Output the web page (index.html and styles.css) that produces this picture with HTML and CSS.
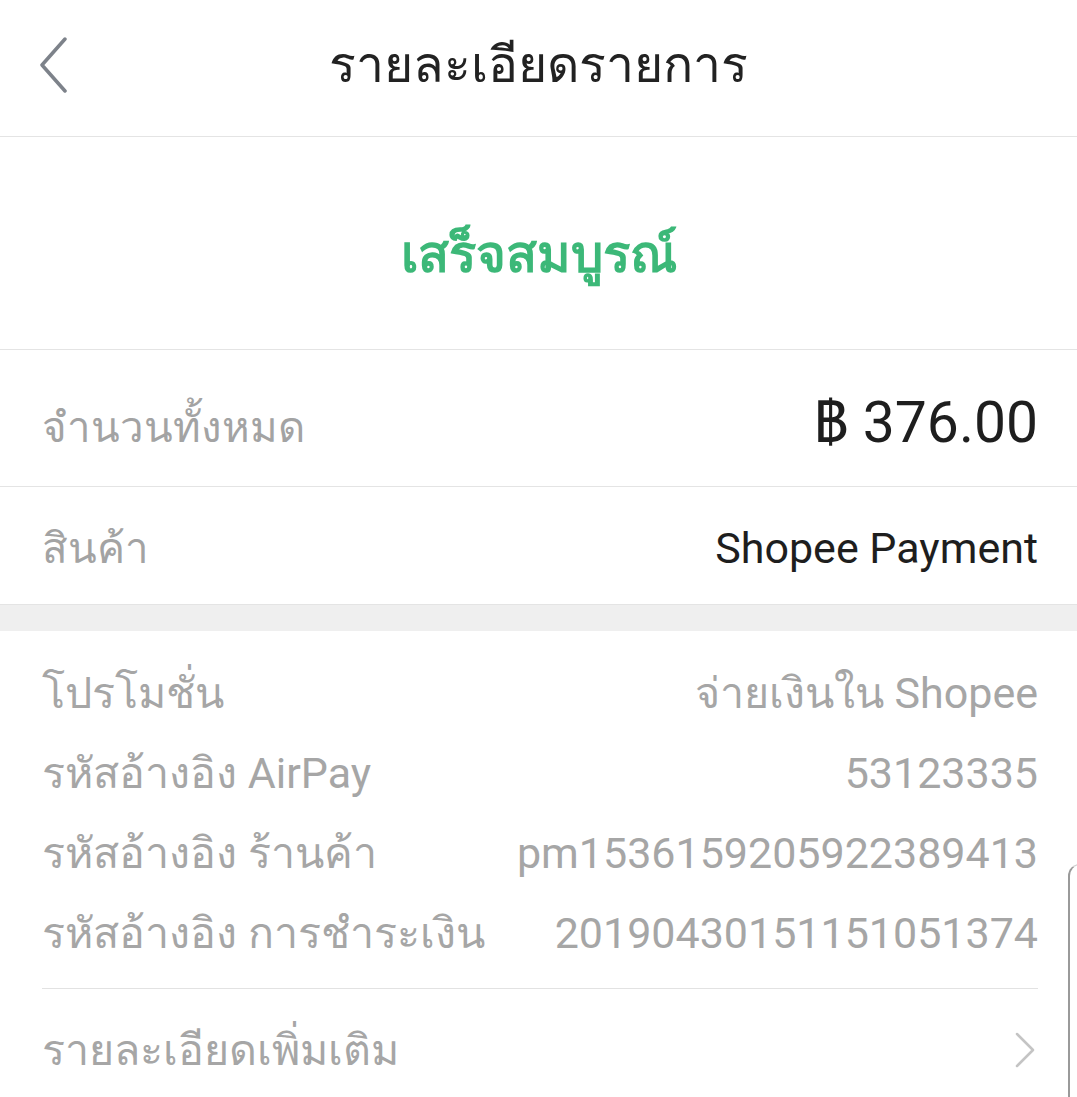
FILE: index.html
```html
<!DOCTYPE html>
<html lang="th">
<head>
<meta charset="utf-8">
<title>รายละเอียดรายการ</title>
<link rel="stylesheet" href="styles.css">
</head>
<body>
<div class="screen">
  <header class="topbar">
    <span class="back">
      <svg width="30" height="56" viewBox="0 0 30 56"><path d="M27 2 L4 28 L27 54" fill="none" stroke="#7d828a" stroke-width="3.5" stroke-linecap="round" stroke-linejoin="round"/></svg>
    </span>
    <h1 class="title">รายละเอียดรายการ</h1>
  </header>
  <section class="status">เสร็จสมบูรณ์</section>
  <div class="row row-total">
    <span class="label">จำนวนทั้งหมด</span>
    <span class="amount">฿ 376.00</span>
  </div>
  <div class="row row-product">
    <span class="label">สินค้า</span>
    <span class="value">Shopee Payment</span>
  </div>
  <div class="gap"></div>
  <section class="details">
    <div class="drow"><span>โปรโมชั่น</span><span>จ่ายเงินใน Shopee</span></div>
    <div class="drow"><span>รหัสอ้างอิง AirPay</span><span>53123335</span></div>
    <div class="drow"><span>รหัสอ้างอิง ร้านค้า</span><span>pm1536159205922389413</span></div>
    <div class="drow"><span>รหัสอ้างอิง การชำระเงิน</span><span>20190430151151051374</span></div>
    <div class="divider"></div>
    <div class="more">
      <span>รายละเอียดเพิ่มเติม</span>
      <svg width="20" height="36" viewBox="0 0 20 36"><path d="M2 2 L18 18 L2 34" fill="none" stroke="#c4c4c4" stroke-width="2.5" stroke-linecap="round" stroke-linejoin="round"/></svg>
    </div>
  </section>
  <div class="edge"></div>
</div>
</body>
</html>
```
FILE: styles.css
```css
* { box-sizing: border-box; }
html, body { margin: 0; padding: 0; background: #fff; }
body {
  font-family: Roboto, "Noto Sans", sans-serif;
  color: #222;
}
.screen {
  position: relative;
  width: 1077px;
  height: 1097px;
  overflow: hidden;
  background: #fff;
}
.topbar {
  height: 137px;
  border-bottom: 1px solid #e4e4e4;
  display: flex;
  align-items: center;
  justify-content: center;
  position: relative;
}
.back {
  position: absolute;
  left: 38px;
  top: 37px;
  display: flex;
}
.title {
  margin: 0;
  font-weight: 400;
  font-size: 50px;
  color: #222;
  padding-bottom: 8px;
}
.status {
  height: 213px;
  border-bottom: 1px solid #e4e4e4;
  display: flex;
  align-items: center;
  justify-content: center;
  color: #3cb878;
  font-size: 51px;
  font-weight: 600;
  padding-top: 20px;
}
.row {
  display: flex;
  align-items: baseline;
  justify-content: space-between;
  padding: 0 39px 0 42px;
  border-bottom: 1px solid #e4e4e4;
}
.row-total { height: 137px; padding-top: 27px; }
.row-product { height: 118px; padding-top: 28px; }
.label {
  color: #a3a3a3;
  font-size: 42px;
}
.amount {
  font-size: 57px;
  color: #1e1e1e;
}
.value {
  font-size: 43px;
  color: #1e1e1e;
}
.gap {
  height: 26px;
  background: #efefef;
}
.details {
  padding: 22px 39px 0 42px;
  color: #a6a6a6;
  font-size: 43px;
}
.drow {
  display: flex;
  justify-content: space-between;
  align-items: center;
  height: 80px;
}
.divider {
  height: 1px;
  background: #e2e2e2;
  margin-top: 15px;
}
.more {
  display: flex;
  justify-content: space-between;
  align-items: center;
  height: 122px;
  padding-right: 3px;
}
.edge {
  position: absolute;
  left: 1068px;
  top: 864px;
  width: 40px;
  height: 260px;
  border-left: 2px solid #9a9a9a;
  border-top: 1px solid #d0d0d0;
  border-top-left-radius: 12px;
}
```
